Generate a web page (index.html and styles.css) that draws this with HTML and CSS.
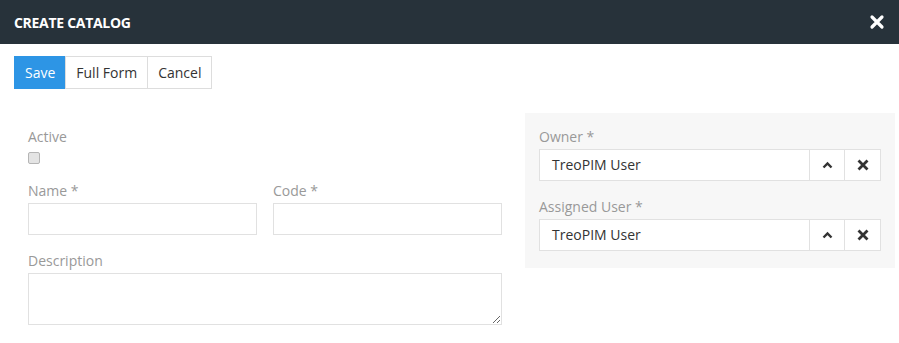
FILE: index.html
```html
<!DOCTYPE html>
<html>
<head>
    <title>Create Catalog</title>
    <link rel="stylesheet" href="styles.css">
</head>
<body>
    <!-- header -->
    <div class="modal-header">
        <span class="modal-title">CREATE CATALOG</span>
        <span class="close">
            <svg width="16" height="16" viewBox="0 0 16 16"><path d="M3 3 L13 13 M13 3 L3 13" stroke="#fff" stroke-width="3.2" stroke-linecap="round"/></svg>
        </span>
    </div>

    <div class="modal-body">
        <!-- buttons -->
        <div class="btn-group">
            <button class="btn btn-primary">Save</button>
            <button class="btn">Full Form</button>
            <button class="btn">Cancel</button>
        </div>

        <div class="form-row">
            <!-- left side -->
            <div class="left">
                <div class="field field-check">
                    <label>Active</label>
                    <input type="checkbox" class="check">
                </div>
                <div class="pair">
                    <div class="field">
                        <label>Name *</label>
                        <input type="text" class="input">
                    </div>
                    <div class="field">
                        <label>Code *</label>
                        <input type="text" class="input">
                    </div>
                </div>
                <div class="field">
                    <label>Description</label>
                    <textarea class="input area"></textarea>
                </div>
            </div>

            <!-- right side -->
            <div class="side">
                <div class="field">
                    <label>Owner *</label>
                    <div class="link-field">
                        <div class="link-value">TreoPIM User</div>
                        <span class="link-btn">
                            <svg width="11" height="8" viewBox="0 0 11 8"><path d="M1.5 6.5 L5.5 2.5 L9.5 6.5" fill="none" stroke="#333" stroke-width="2.4"/></svg>
                        </span>
                        <span class="link-btn">
                            <svg width="12" height="12" viewBox="0 0 12 12"><path d="M1.5 1.5 L10.5 10.5 M10.5 1.5 L1.5 10.5" stroke="#333" stroke-width="2.8"/></svg>
                        </span>
                    </div>
                </div>
                <div class="field">
                    <label>Assigned User *</label>
                    <div class="link-field">
                        <div class="link-value">TreoPIM User</div>
                        <span class="link-btn">
                            <svg width="11" height="8" viewBox="0 0 11 8"><path d="M1.5 6.5 L5.5 2.5 L9.5 6.5" fill="none" stroke="#333" stroke-width="2.4"/></svg>
                        </span>
                        <span class="link-btn">
                            <svg width="12" height="12" viewBox="0 0 12 12"><path d="M1.5 1.5 L10.5 10.5 M10.5 1.5 L1.5 10.5" stroke="#333" stroke-width="2.8"/></svg>
                        </span>
                    </div>
                </div>
            </div>
        </div>
    </div>
</body>
</html>
```

FILE: styles.css
```css
body {
    font-family: "Open Sans", "Liberation Sans", sans-serif;
    font-size: 14px;
    margin: 0;
    padding: 0;
    background-color: #fff;
    color: #333;
}
.modal-header {
    height: 44px;
    background-color: #27323a;
    padding: 0 14px;
    display: flex;
    align-items: center;
    justify-content: space-between;
}
.modal-title {
    color: #fff;
    font-weight: bold;
    font-size: 14px;
    letter-spacing: -0.3px;
}
.close {
    display: flex;
}
.modal-body {
    padding: 12px 4px 0 14px;
}
.btn-group {
    display: flex;
}
.btn {
    font-family: inherit;
    font-size: 14px;
    height: 33px;
    padding: 0 10px;
    background-color: #fff;
    color: #333;
    border: 1px solid #ddd;
    margin-left: -1px;
    cursor: pointer;
}
.btn-primary {
    background-color: #2d95e5;
    border-color: #2d95e5;
    color: #fff;
    margin-left: 0;
}
.form-row {
    display: flex;
    gap: 14px;
    margin-top: 24px;
}
.left {
    width: 474px;
    padding: 14px 9px 0 14px;
}
.side {
    width: 342px;
    padding: 14px 14px 17px 14px;
    background-color: #f7f7f7;
    align-self: flex-start;
}
.field {
    display: flex;
    flex-direction: column;
    margin-bottom: 16px;
}
.field-check {
    margin-bottom: 17px;
}
.field label {
    color: #999;
    line-height: 20px;
    margin-bottom: 2px;
}
.pair {
    display: flex;
    gap: 16px;
}
.pair .field {
    flex: 1;
}
.check {
    appearance: none;
    margin: 3px 0 0 0;
    width: 12px;
    height: 12px;
    border: 1px solid #b5b5b5;
    border-radius: 2px;
    background-color: #e4e4e4;
}
.input {
    height: 32px;
    box-sizing: border-box;
    border: 1px solid #e1e1e1;
    background-color: #fff;
    font-family: inherit;
    font-size: 14px;
    padding: 0 12px;
}
.area {
    height: 52px;
    resize: vertical;
}
.side .field:last-child {
    margin-bottom: 0;
}
.link-field {
    display: flex;
    height: 32px;
}
.link-value {
    flex: 1;
    border: 1px solid #e1e1e1;
    background-color: #fff;
    padding: 0 12px;
    line-height: 30px;
    color: #333;
}
.link-btn {
    width: 35px;
    box-sizing: border-box;
    border: 1px solid #e1e1e1;
    border-left: none;
    background-color: #fff;
    display: flex;
    align-items: center;
    justify-content: center;
}
.link-btn:last-child {
    width: 36px;
}
```
